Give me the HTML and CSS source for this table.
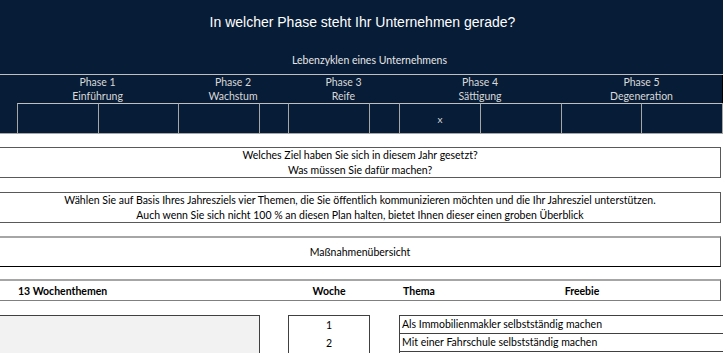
FILE: index.html
```html
<!DOCTYPE html>
<html lang="de">
<head>
    <meta charset="UTF-8">
    <meta name="viewport" content="width=device-width, initial-scale=1.0">
    <title>Jahresplanung - Wochenthemen</title>
    <link rel="stylesheet" href="styles.css">
</head>
<body>
    <div class="sheet">
        <header class="hero">
            <h1>In welcher Phase steht Ihr Unternehmen gerade?</h1>
            <p class="subtitle">Lebenzyklen eines Unternehmens</p>
        </header>

        <div class="phases">
            <div class="phase-lead"></div>
            <div class="phase"><span>Phase 1</span><span>Einführung</span></div>
            <div class="phase"><span>Phase 2</span><span>Wachstum</span></div>
            <div class="phase"><span>Phase 3</span><span>Reife</span></div>
            <div class="phase"><span>Phase 4</span><span>Sättigung</span></div>
            <div class="phase"><span>Phase 5</span><span>Degeneration</span></div>
            <div class="phase-end"></div>
        </div>

        <div class="marks">
            <div class="mark lead"></div>
            <div class="mark"></div>
            <div class="mark"></div>
            <div class="mark"></div>
            <div class="mark"></div>
            <div class="mark"></div>
            <div class="mark"></div>
            <div class="mark">x</div>
            <div class="mark"></div>
            <div class="mark"></div>
            <div class="mark"></div>
            <div class="mark end"></div>
        </div>

        <div class="note note-first">
            <p>Welches Ziel haben Sie sich in diesem Jahr gesetzt?</p>
            <p>Was müssen Sie dafür machen?</p>
        </div>

        <div class="note">
            <p>Wählen Sie auf Basis Ihres Jahresziels vier Themen, die Sie öffentlich kommunizieren möchten und die Ihr Jahresziel unterstützen.</p>
            <p>Auch wenn Sie sich nicht 100 % an diesen Plan halten, bietet Ihnen dieser einen groben Überblick</p>
        </div>

        <div class="note note-title">
            <p>Maßnahmenübersicht</p>
        </div>

        <div class="plan-head">
            <div class="col-topics">13 Wochenthemen</div>
            <div class="col-week">Woche</div>
            <div class="col-theme">Thema</div>
            <div class="col-freebie">Freebie</div>
        </div>

        <div class="plan-row">
            <div class="topic-pool"></div>
            <div class="week-col">
                <div>1</div>
                <div>2</div>
            </div>
            <div class="theme-col">
                <div class="theme">Als Immobilienmakler selbstständig machen</div>
                <div class="theme">Mit einer Fahrschule selbstständig machen</div>
                <div class="theme"></div>
            </div>
        </div>
    </div>
</body>
</html>
```

FILE: styles.css
```css
* {
    box-sizing: border-box;
}
body {
    margin: 0;
    background-color: white;
    font-family: Lato, "Noto Sans", sans-serif;
    font-size: 10.5px;
    color: #000;
    overflow: hidden;
}
p {
    margin: 0;
}
.sheet {
    width: 723px;
}

/* dark header block */
.hero {
    height: 74px;
    background-color: #071c36;
    color: white;
    text-align: center;
    padding-top: 13px;
}
.hero h1 {
    margin: 0 0 0 2px;
    font-family: "Liberation Sans", Arial, sans-serif;
    font-weight: normal;
    font-size: 14px;
    line-height: 18px;
}
.subtitle {
    margin-top: 22px;
    margin-left: 16px;
    line-height: 14px;
    color: #e6e6e6;
}

.phases {
    display: grid;
    grid-template-columns: 17px 161px 110px 111px 162px 161px 1px;
    height: 29px;
    background-color: #071c36;
    border-top: 1px solid #bfbfbf;
    color: #d9d9d9;
}
.phase {
    display: flex;
    flex-direction: column;
    align-items: center;
    justify-content: center;
    line-height: 14px;
}
.phase-end {
    background-color: #000;
}

.marks {
    display: grid;
    grid-template-columns: 17px 81px 80px 81px 29px 81px 30px 81px 81px 80px 81px 1px;
    height: 31px;
    background-color: #071c36;
    border-bottom: 1px solid #a6a6a6;
    color: #d9d9d9;
}
.mark {
    border-top: 1px solid #bfbfbf;
    border-left: 1px solid #a6a6a6;
    display: flex;
    align-items: center;
    justify-content: center;
    font-size: 10px;
}
.mark.lead {
    border: none;
}
.mark.end {
    border-top: none;
    background-color: #000;
}

/* boxed notes on the white part */
.note {
    height: 31px;
    width: 722px;
    margin: 14px 0 0 -1px;
    border: 1px solid #595959;
    display: flex;
    flex-direction: column;
    justify-content: center;
    text-align: center;
    line-height: 14.5px;
}
.note-first {
    margin-top: 13px;
}
.note-title {
    margin-top: 13px;
    border-top: 2px solid #a6a6a6;
    border-bottom-color: #000;
}

.plan-head {
    display: flex;
    align-items: center;
    height: 22px;
    width: 722px;
    margin: 12px 0 0 -1px;
    border-top: 2px solid #a6a6a6;
    border-bottom: 1px solid #808080;
    border-right: 1px solid #595959;
    font-weight: bold;
}
.col-topics {
    width: 289px;
    padding-left: 19px;
}
.col-week {
    width: 82px;
    text-align: center;
}
.col-theme {
    width: 162px;
    padding-left: 33px;
}
.col-freebie {
    width: 100px;
    text-align: center;
}

.plan-row {
    display: flex;
    align-items: flex-start;
    margin: 14px 0 0 -1px;
}
.topic-pool {
    width: 261px;
    height: 60px;
    margin-right: 28px;
    background-color: #f2f2f2;
    border: 1px solid #404040;
}
.week-col {
    width: 82px;
    height: 60px;
    margin-right: 29px;
    border: 1px solid #404040;
    text-align: center;
}
.week-col div {
    height: 18px;
    line-height: 18px;
}
.theme-col {
    flex: 1;
    border-top: 1px solid #404040;
    border-left: 1px solid #404040;
}
.theme {
    height: 18px;
    line-height: 17px;
    padding-left: 2px;
    border-bottom: 1px solid #404040;
}
```
